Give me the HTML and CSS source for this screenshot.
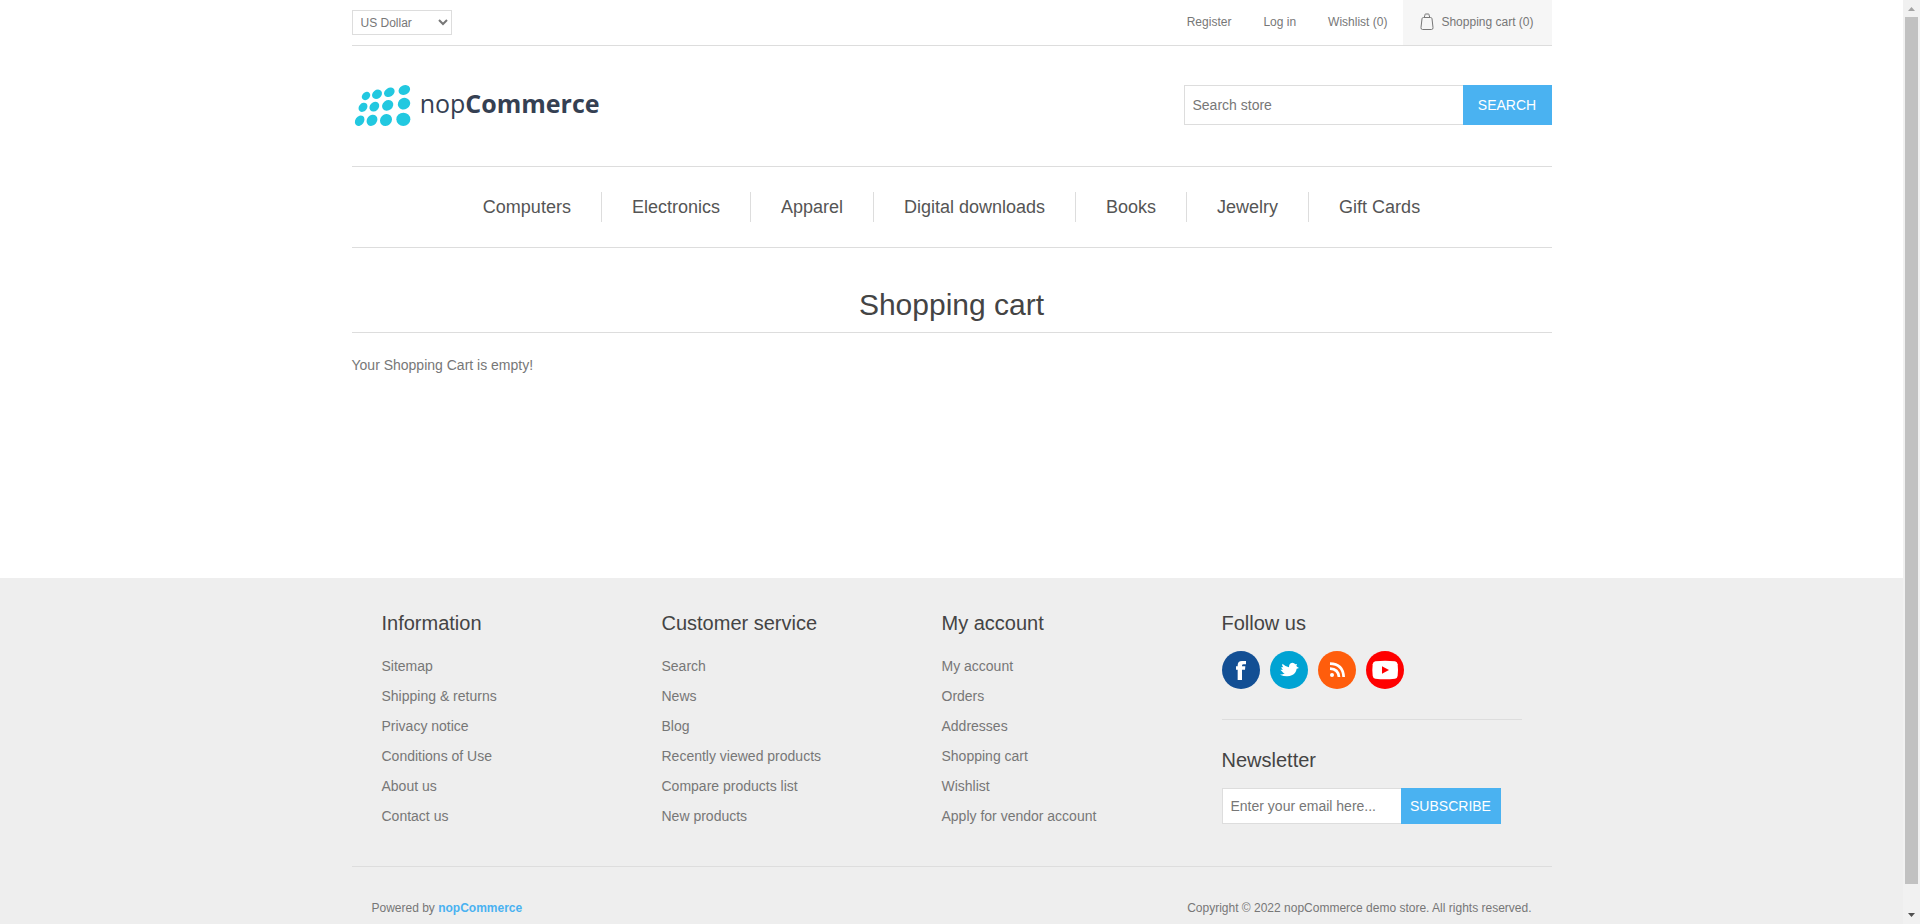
FILE: index.html
```html
<!DOCTYPE html>
<html lang="en">
<head>
<meta charset="utf-8">
<title>nopCommerce demo store. Shopping Cart</title>
<meta name="viewport" content="width=device-width, initial-scale=1">
<link rel="stylesheet" href="styles.css">
</head>
<body>
<div class="page">
  <header class="wrap">
    <div class="header-upper">
      <select class="currency" aria-label="Currency selector">
        <option>US Dollar</option>
        <option>Euro</option>
      </select>
      <nav class="header-links" aria-label="Account">
        <a href="#">Register</a>
        <a href="#">Log in</a>
        <a href="#">Wishlist (0)</a>
        <a class="cart-link" href="#">
          <svg class="cart-icon" viewBox="0 0 14 18" aria-hidden="true"><path d="M3.500 4.500h7q1.300 0 1.500 1.200l1 8.800q.2 2-1.500 2h-9q-1.700 0-1.500-2l1-8.800q.2-1.200 1.500-1.200zM4.500 4.500v-1.500q0-.5.5-.5v-1q0-.5.5-.5h3q.5 0 .5.5v1q.5 0 .5.5v1.500"/></svg>
          <span>Shopping cart (0)</span>
        </a>
      </nav>
    </div>
    <div class="header-lower">
      <a class="logo" href="#" aria-label="nopCommerce">
        <svg viewBox="36 249 747 135">
          <g fill="#22c8e0">
            <ellipse cx="78" cy="288" rx="14" ry="11" transform="rotate(-42 78 288)"/>
            <ellipse cx="111" cy="283" rx="16" ry="13" transform="rotate(-38 111 283)"/>
            <ellipse cx="148" cy="277" rx="17" ry="13" transform="rotate(-32 148 277)"/>
            <ellipse cx="193" cy="270" rx="18" ry="14" transform="rotate(-25 193 270)"/>
            <ellipse cx="69" cy="322" rx="15" ry="12" transform="rotate(-48 69 322)"/>
            <ellipse cx="103" cy="320" rx="16" ry="13" transform="rotate(-42 103 320)"/>
            <ellipse cx="143" cy="316" rx="18" ry="15" transform="rotate(-38 143 316)"/>
            <ellipse cx="192" cy="311" rx="19" ry="17" transform="rotate(-30 192 311)"/>
            <ellipse cx="59" cy="362" rx="17" ry="13" transform="rotate(-55 59 362)"/>
            <ellipse cx="96" cy="361" rx="18" ry="15" transform="rotate(-50 96 361)"/>
            <ellipse cx="138" cy="360" rx="19" ry="17" transform="rotate(-45 138 360)"/>
            <ellipse cx="190" cy="358" rx="21" ry="20"/>
          </g>
          <text class="logo-text" x="239" y="338">nop<tspan class="logo-bold">Commerce</tspan></text>
        </svg>
      </a>
      <form class="search">
        <input class="field" type="text" placeholder="Search store" aria-label="Search store">
        <button class="btn" type="button">SEARCH</button>
      </form>
    </div>
  </header>

  <nav class="wrap menu" aria-label="Categories">
    <a href="#">Computers</a>
    <a href="#">Electronics</a>
    <a href="#">Apparel</a>
    <a href="#">Digital downloads</a>
    <a href="#">Books</a>
    <a href="#">Jewelry</a>
    <a href="#">Gift Cards</a>
  </nav>

  <main class="wrap main">
    <h1>Shopping cart</h1>
    <p>Your Shopping Cart is empty!</p>
  </main>

  <footer class="footer">
    <div class="wrap footer-upper">
      <section>
        <h2>Information</h2>
        <ul>
          <li><a href="#">Sitemap</a></li>
          <li><a href="#">Shipping &amp; returns</a></li>
          <li><a href="#">Privacy notice</a></li>
          <li><a href="#">Conditions of Use</a></li>
          <li><a href="#">About us</a></li>
          <li><a href="#">Contact us</a></li>
        </ul>
      </section>
      <section>
        <h2>Customer service</h2>
        <ul>
          <li><a href="#">Search</a></li>
          <li><a href="#">News</a></li>
          <li><a href="#">Blog</a></li>
          <li><a href="#">Recently viewed products</a></li>
          <li><a href="#">Compare products list</a></li>
          <li><a href="#">New products</a></li>
        </ul>
      </section>
      <section>
        <h2>My account</h2>
        <ul>
          <li><a href="#">My account</a></li>
          <li><a href="#">Orders</a></li>
          <li><a href="#">Addresses</a></li>
          <li><a href="#">Shopping cart</a></li>
          <li><a href="#">Wishlist</a></li>
          <li><a href="#">Apply for vendor account</a></li>
        </ul>
      </section>
      <section>
        <h2>Follow us</h2>
        <div class="social">
          <a href="#" aria-label="Facebook"><svg viewBox="0 0 114 114"><circle cx="57" cy="57" r="57" fill="#134f94"/><path fill="#fff" d="M47 87V56h-5V46h5v-3q0-13 13-13h12v10h-7q-5 0-5 4v2h10l-1 10h-9v31z"/></svg></a>
          <a href="#" aria-label="Twitter"><svg viewBox="0 0 114 114"><circle cx="57" cy="57" r="57" fill="#00a3d3"/><path fill="#fff" d="M37 38q9 8 20 11-1-12 10-14 6 0 9 5l5-1-2 6 3 3 5 3-7 2q-2 13-13 19-16 8-37-1 10 0 14-4-6-1-7-5l-6-6q4 1 8 0-5-3-5-8l6 1q-5-5-3-11z"/></svg></a>
          <a href="#" aria-label="RSS"><svg viewBox="0 0 114 114"><circle cx="57" cy="57" r="57" fill="#ff5d0c"/><circle cx="42" cy="72" r="6" fill="#fff"/><path fill="none" stroke="#fff" stroke-width="8" d="M36 53q25 1 27 25M36 38q39 1 41 40"/></svg></a>
          <a href="#" aria-label="YouTube"><svg viewBox="0 0 114 114"><circle cx="57" cy="57" r="57" fill="#f00"/><path fill="#fff" d="M28 31q29-3 59 0 7 1 8 9 2 17 0 34-1 8-8 9-30 3-59 0-7-1-8-9-2-17 0-34 1-8 8-9z"/><path fill="#f00" d="M48 46l21 11-21 11z"/></svg></a>
        </div>
        <form class="newsletter">
          <h2>Newsletter</h2>
          <div class="newsletter-row">
            <input class="field" type="email" placeholder="Enter your email here..." aria-label="Email for newsletter">
            <button class="btn" type="button">SUBSCRIBE</button>
          </div>
        </form>
      </section>
    </div>
    <div class="wrap footer-lower">
      <span>Powered by <a href="#">nopCommerce</a></span>
      <span>Copyright © 2022 nopCommerce demo store. All rights reserved.</span>
    </div>
  </footer>
</div>
<div class="scrollbar" aria-hidden="true">
  <svg class="arrow" viewBox="0 0 17 17"><path fill="#a3a3a3" d="M5 11h7L8.500 7z"/></svg>
  <div class="thumb"></div>
  <svg class="arrow" viewBox="0 0 17 17"><path fill="#505050" d="M5 6h7l-3.500 4z"/></svg>
</div>
</body>
</html>
```
FILE: styles.css
```css
* {
  box-sizing: border-box;
}

body {
  display: flex;
  min-height: 100vh;
  margin: 0;
  background: #fff;
  color: #777;
  font: 14px/20px "Liberation Sans", Arial, Helvetica, sans-serif;
}

a {
  color: inherit;
  text-decoration: none;
}

h1,
h2,
p,
ul {
  margin: 0;
  padding: 0;
  font-weight: normal;
}

ul {
  list-style: none;
}

input,
select,
button {
  margin: 0;
  border-radius: 0;
  font-family: inherit;
}

.page {
  display: flex;
  flex: 1;
  flex-direction: column;
  min-width: 0;
}

.wrap {
  width: 100%;
  max-width: 1200px;
  margin: 0 auto;
}

/* Header */
.header-upper {
  display: flex;
  align-items: center;
  justify-content: space-between;
  border-bottom: 1px solid #ddd;
  font-size: 12px;
}

.currency {
  width: 100px;
  height: 25px;
  padding: 0 4px;
  border: 1px solid #ddd;
  background: #fff;
  color: #777;
  font-size: 12px;
}

.header-links {
  display: flex;
  align-items: center;
  gap: 32px;
  line-height: 45px;
}

.cart-link {
  display: flex;
  align-items: center;
  gap: 7px;
  height: 45px;
  margin-left: -16px;
  padding: 0 18px 0 17px;
  background: #f6f6f6;
}

.cart-icon {
  width: 14px;
  height: 18px;
  margin-bottom: 2px;
  fill: none;
  stroke: #777;
}

.header-lower {
  display: flex;
  align-items: center;
  justify-content: space-between;
  padding: 37px 0 38px;
  border-bottom: 1px solid #ddd;
}

.logo svg {
  display: block;
  width: 249px;
  height: 45px;
}

.logo-text {
  fill: #354052;
  font-family: "Open Sans", "Noto Sans", sans-serif;
  font-size: 75px;
}

.logo-bold {
  font-weight: 700;
}

.field {
  flex: 1;
  min-width: 0;
  border: 1px solid #ddd;
  border-right: 0;
  background: #fff;
  color: #777;
  font-size: 14px;
}

.field::placeholder {
  color: #777;
}

.btn {
  padding: 0;
  border: 0;
  background: #4ab2f1;
  color: #fff;
  font-size: 14px;
}

.search {
  display: flex;
  align-self: flex-start;
  width: 368px;
  height: 40px;
  margin-top: 2px;
}

.search .field {
  padding: 0 8px;
}

.search .btn {
  width: 89px;
}

/* Categories */
.menu {
  display: flex;
  justify-content: center;
  padding: 25px 0;
  border-bottom: 1px solid #ddd;
  color: #555;
  font-size: 18px;
  line-height: 30px;
}

.menu a {
  padding: 0 30px;
}

.menu a + a {
  border-left: 1px solid #ddd;
}

/* Content */
.main {
  flex: 1;
}

.main h1 {
  padding: 37px 0 7px;
  border-bottom: 1px solid #ddd;
  color: #444;
  font-size: 30px;
  line-height: 40px;
  text-align: center;
}

.main p {
  padding-top: 22px;
}

/* Footer */
.footer {
  background: #eee;
}

.footer-upper {
  display: grid;
  grid-template-columns: 1fr 1fr 1fr 300px;
  padding: 30px 30px 35px;
}

.footer h2 {
  color: #444;
  font-size: 20px;
  line-height: 30px;
}

.footer-upper ul {
  padding-top: 13px;
  line-height: 30px;
}

.social {
  display: flex;
  gap: 10px;
  padding: 13px 0 30px;
  border-bottom: 1px solid #ddd;
}

.social svg {
  display: block;
  width: 38px;
  height: 38px;
}

.newsletter {
  padding-top: 25px;
}

.newsletter-row {
  display: flex;
  width: 279px;
  height: 36px;
  margin-top: 13px;
}

.newsletter .field {
  padding: 0 8px;
}

.newsletter .btn {
  width: 100px;
}

.footer-lower {
  display: flex;
  justify-content: space-between;
  padding: 31px 20px 6px;
  border-top: 1px solid #ddd;
  font-size: 12px;
}

.footer-lower a {
  color: #4ab2f1;
  font-weight: bold;
}

/* Scroll strip */
.scrollbar {
  position: sticky;
  top: 0;
  display: flex;
  flex-direction: column;
  width: 17px;
  height: 100vh;
  background: #f1f1f1;
}

.arrow {
  width: 17px;
  height: 17px;
}

.thumb {
  flex: 1;
  margin: 0 2px 23px;
  background: #c1c1c1;
}
```
